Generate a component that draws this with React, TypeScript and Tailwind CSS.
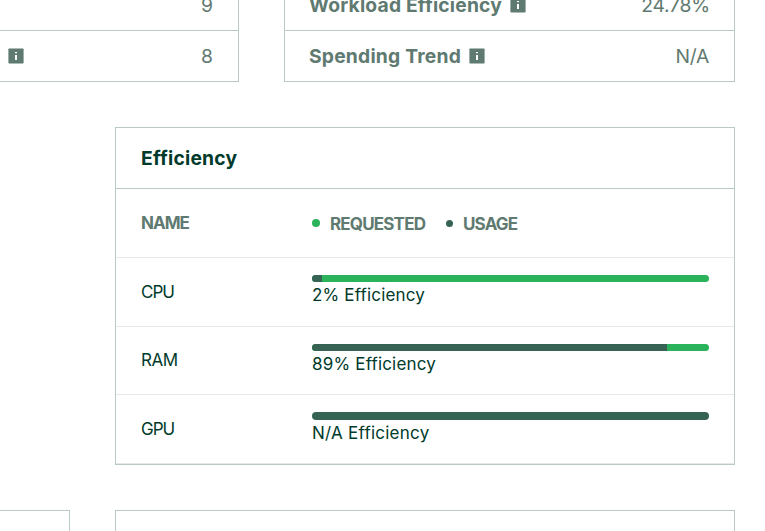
import type { ReactNode } from "react";

function InfoIcon() {
  return (
    <svg className="block size-4 shrink-0" viewBox="0 0 16 16" aria-hidden="true">
      <rect x="0.4" y="0.4" width="15.2" height="15.2" rx="0.8" fill="#5f7a71" />
      <rect x="7" y="4" width="2" height="1.2" fill="#fff" />
      <rect x="7" y="7" width="2" height="5" fill="#fff" />
    </svg>
  );
}

function StatRow({ label, value }: { label?: ReactNode; value: ReactNode }) {
  return (
    <div className="flex h-[51px] shrink-0 items-center justify-between border-b border-[#b9cac5] pr-[25px] text-[19.3px] leading-6 text-[#5f7a71]">
      <div className="flex items-center gap-2">{label}</div>
      {value}
    </div>
  );
}

function Bar({ used }: { used: number }) {
  return (
    <div className="flex h-full overflow-hidden rounded-full bg-[#2ab35a]">
      <div className="h-full bg-[#376354]" style={{ width: `${used}%` }} />
    </div>
  );
}

const rows = [
  { name: "CPU", nameStyle: "tracking-[-1px] pt-0.5", label: "2% Efficiency", labelStyle: "tracking-[0.17px]", used: 2.5, height: "h-[69px]", bar: "h-[7px]" },
  { name: "RAM", nameStyle: "tracking-[-0.5px]", label: "89% Efficiency", labelStyle: "tracking-[0.18px]", used: 89.4, height: "h-[68px]", bar: "h-[7px]" },
  { name: "GPU", nameStyle: "tracking-[-1px] pt-0.5", label: "N/A Efficiency", labelStyle: "tracking-[0.25px]", used: 100, height: "h-[69px]", bar: "h-2" },
];

export default function App() {
  return (
    <main className="h-[531px] w-[765px] overflow-hidden bg-white font-['Inter',sans-serif] whitespace-nowrap">
      <div className="flex h-[82px] gap-[45px] overflow-hidden">
        <section className="flex w-[239px] flex-col justify-end border-r border-[#b9cac5]">
          <StatRow value={<span>9</span>} />
          <StatRow label={<span className="pl-2"><InfoIcon /></span>} value={<span>8</span>} />
        </section>
        <section className="flex w-[451px] flex-col justify-end border-x border-[#b9cac5]">
          <StatRow
            label={<><span className="w-[217px] pl-6 font-bold tracking-[0.18px]">Workload Efficiency</span><InfoIcon /></>}
            value={<span className="-mr-px tracking-[-0.2px]">24.78%</span>}
          />
          <StatRow
            label={<><span className="w-44 pl-6 font-bold tracking-[0.2px]">Spending Trend</span><InfoIcon /></>}
            value={<span className="tracking-[-0.3px]">N/A</span>}
          />
        </section>
      </div>

      <section className="mt-[45px] ml-[115px] w-[620px] border border-[#b9cac5] text-[#003a2b]">
        <h2 className="flex h-[61px] items-center border-b border-[#b9cac5] px-[25px] text-[19.3px] font-bold tracking-[0.2px]">Efficiency</h2>
        <div className="flex h-[69px] items-center border-b border-[#e5eae8] px-[25px] text-[17px] font-bold text-[#5f7a71]">
          <span className="w-[171px] pt-0.5 tracking-[-1px]">NAME</span>
          <div className="flex items-center">
            <i className="mr-2.5 size-2 rounded-full bg-[#2ab35a]" />
            <span className="w-[116px] pt-[3px] tracking-[-0.83px]">REQUESTED</span>
            <i className="mr-2.5 size-[7px] rounded-full bg-[#376354]" />
            <span className="pt-[3px] tracking-[-0.83px]">USAGE</span>
          </div>
        </div>
        {rows.map((row) => (
          <div key={row.name} className={`flex border-b border-[#e5eae8] px-[25px] text-[17px] ${row.height}`}>
            <span className={`flex w-[171px] items-center ${row.nameStyle}`}>{row.name}</span>
            <div className="flex-1 pt-[17px]">
              <div className={row.bar}>
                <Bar used={row.used} />
              </div>
              <div className={`leading-[26px] ${row.labelStyle}`}>{row.label}</div>
            </div>
          </div>
        ))}
      </section>

      <div className="mt-[45px] flex h-[21px] gap-[45px]">
        <section className="w-[70px] border-t border-r border-[#b9cac5]" />
        <section className="w-[620px] border-x border-t border-[#b9cac5]" />
      </div>
    </main>
  );
}
